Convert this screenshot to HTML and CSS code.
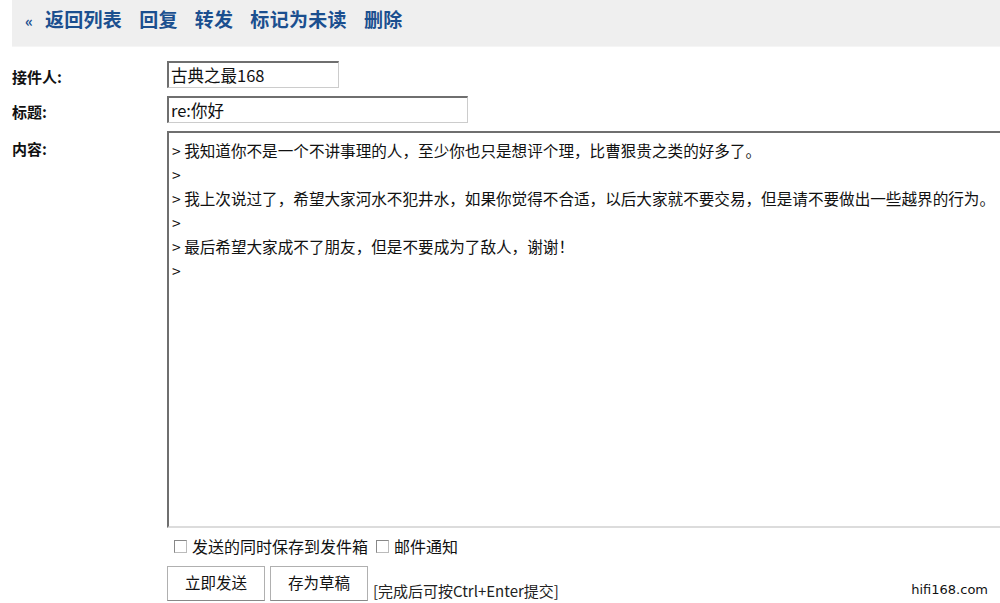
FILE: index.html
```
<!DOCTYPE html>
<html lang="zh-cn">
<head>
    <meta charset="UTF-8">
    <meta name="viewport" content="width=device-width, initial-scale=1.0">
    <title>回复短消息</title>
    <link rel="stylesheet" href="styles.css">
</head>
<body>
    <!-- 顶部操作栏 -->
    <div class="toolbar">
        <span class="back">&laquo;</span>
        <a href="#">返回列表</a>
        <a href="#">回复</a>
        <a href="#">转发</a>
        <a href="#">标记为未读</a>
        <a href="#">删除</a>
    </div>

    <!-- 回复表单 -->
    <form class="form">
        <label class="label" for="to">接件人:</label>
        <div class="field"><input type="text" id="to" class="input input-short" value="古典之最168"></div>

        <label class="label" for="title">标题:</label>
        <div class="field"><input type="text" id="title" class="input input-long" value="re:你好"></div>

        <label class="label label-top" for="content">内容:</label>
        <div class="field">
            <textarea id="content" class="content" wrap="off">&gt; 我知道你不是一个不讲事理的人，至少你也只是想评个理，比曹狠贵之类的好多了。
&gt;
&gt; 我上次说过了，希望大家河水不犯井水，如果你觉得不合适，以后大家就不要交易，但是请不要做出一些越界的行为。
&gt;
&gt; 最后希望大家成不了朋友，但是不要成为了敌人，谢谢！
&gt;</textarea>
        </div>

        <div></div>
        <div class="options">
            <label class="check"><span class="box"></span>发送的同时保存到发件箱</label>
            <label class="check"><span class="box"></span>邮件通知</label>
        </div>

        <div></div>
        <div class="actions">
            <button type="button" class="btn">立即发送</button>
            <button type="button" class="btn">存为草稿</button>
            <span class="hint">[完成后可按Ctrl+Enter提交]</span>
        </div>
    </form>

    <div class="watermark">hifi168.com</div>
</body>
</html>
```
FILE: styles.css
```
/* 页面基础 */
html {
    overflow: hidden;
}

body {
    margin: 0;
    padding: 0 0 0 12px;
    font-family: "Noto Sans CJK SC", "Liberation Sans", sans-serif;
    font-size: 15px;
    color: #111;
    background: #fff;
    position: relative;
    height: 603px;
}

/* 顶部操作栏 */
.toolbar {
    background: #efefef;
    height: 47px;
    box-sizing: border-box;
    padding: 5px 0 0 13px;
    display: flex;
    align-items: baseline;
    gap: 17px;
    border-bottom: 1px solid #f5f5f5;
}

.toolbar a {
    color: #1b4f8f;
    font-size: 19px;
    font-weight: bold;
    text-decoration: none;
    letter-spacing: 0.3px;
}

.toolbar .back {
    color: #1b4f8f;
    font-size: 15px;
    font-weight: bold;
    margin-right: -5px;
}

/* 表单布局 */
.form {
    display: grid;
    grid-template-columns: 155px 1fr;
    row-gap: 8px;
    margin-top: 14px;
}

.label {
    font-weight: bold;
    font-size: 15px;
    align-self: center;
    padding-top: 4px;
}

.label-top {
    align-self: start;
    padding-top: 7px;
}

.input {
    height: 27px;
    box-sizing: border-box;
    border: 1px solid #ccc;
    border-top: 2px solid #6f6f6f;
    border-left: 2px solid #6f6f6f;
    padding: 0 2px;
    font-family: "Noto Sans CJK SC", "Liberation Sans", sans-serif;
    font-size: 16.5px;
    color: #111;
    outline: none;
}

.input-short {
    width: 172px;
}

.input-long {
    width: 301px;
}

.content {
    display: block;
    width: 860px;
    height: 397px;
    box-sizing: border-box;
    border: none;
    border-top: 2px solid #6f6f6f;
    border-left: 2px solid #6f6f6f;
    border-bottom: 2px solid #dcdcdc;
    padding: 5px 3px;
    font-family: "Noto Sans CJK SC", "Liberation Sans", sans-serif;
    font-size: 15.6px;
    line-height: 24px;
    color: #111;
    white-space: pre;
    overflow: hidden;
    resize: none;
    outline: none;
}

/* 选项 */
.options {
    display: flex;
    gap: 8px;
    margin-top: -2px;
    padding-left: 7px;
    font-size: 16px;
}

.check {
    display: flex;
    align-items: center;
    gap: 5px;
}

.box {
    width: 11px;
    height: 11px;
    border: 1px solid #bbb;
    border-top-color: #888;
    border-left-color: #888;
    background: #fff;
}

/* 按钮 */
.actions {
    display: flex;
    align-items: flex-end;
    gap: 5px;
    margin-top: 0;
}

.btn {
    width: 98px;
    height: 35px;
    background: #fff;
    border: 1px solid #b0b0b0;
    border-bottom-color: #888;
    font-family: "Noto Sans CJK SC", "Liberation Sans", sans-serif;
    font-size: 15.5px;
    color: #111;
    padding: 0 0 4px;
}

.hint {
    font-size: 15px;
    color: #222;
    line-height: 20px;
    margin-bottom: 0;
}

/* 水印 */
.watermark {
    position: absolute;
    right: 12px;
    bottom: 6px;
    font-family: "DejaVu Sans", sans-serif;
    font-size: 13px;
    color: #111;
}
```
